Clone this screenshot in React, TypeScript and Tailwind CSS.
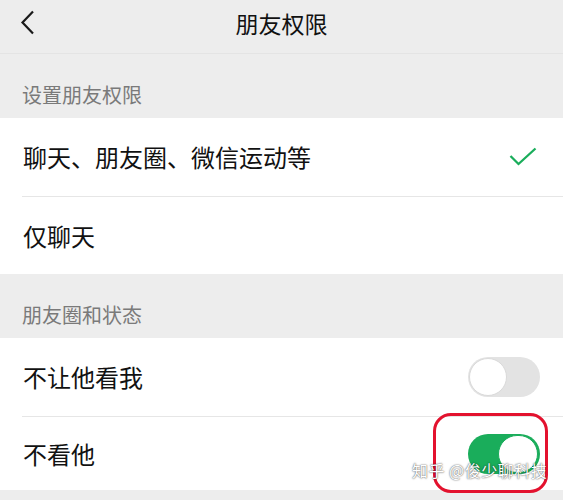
import React from "react";

const font = { fontFamily: '"Noto Sans CJK SC", "Noto Sans", sans-serif' };

function Toggle({ on }: { on: boolean }) {
  return on ? (
    <div className="w-[72px] h-[40px] rounded-full bg-[#1aad5b] flex items-center justify-end p-[2px]">
      <div className="w-[40px] h-[38px] rounded-full bg-white border border-[#1aad5b]" />
    </div>
  ) : (
    <div className="w-[72px] h-[40px] rounded-full bg-[#e3e3e3] flex items-center justify-start p-[1px]">
      <div className="w-[38px] h-[38px] rounded-full bg-white border border-[#dadada]" />
    </div>
  );
}

export default function App() {
  return (
    <div className="w-[563px] h-[500px] bg-[#ededed] overflow-hidden relative" style={font}>
      <div className="h-[54px] relative flex items-center justify-center border-b border-[#e4e4e4]">
        <svg className="absolute left-[19px] top-[10px]" width="17" height="25" viewBox="0 0 17 25">
          <path d="M14 1.5 L3.5 12.5 L14 23.5" fill="none" stroke="#1a1a1a" strokeWidth="2.2" />
        </svg>
        <span className="text-[23px] text-[#111] leading-none -mt-[6px]">朋友权限</span>
      </div>
      <div className="h-[64px] flex items-end pb-[8px] pl-[22px] text-[20px] text-[#7a7a7a]">设置朋友权限</div>
      <div className="bg-white">
        <div className="h-[78px] flex items-center justify-between pl-[23px] pr-[26px]">
          <span className="text-[24px] text-[#111]">聊天、朋友圈、微信运动等</span>
          <svg width="28" height="20" viewBox="0 0 28 20">
            <path d="M1.5 9 L9.5 17 L26.5 1.5" fill="none" stroke="#1aad5b" strokeWidth="2.3" />
          </svg>
        </div>
        <div className="ml-[22px] h-px bg-[#e6e6e6]" />
        <div className="h-[77px] flex items-center pl-[23px]">
          <span className="text-[24px] text-[#111]">仅聊天</span>
        </div>
      </div>
      <div className="h-[64px] flex items-end pb-[8px] pl-[22px] text-[20px] text-[#7a7a7a]">朋友圈和状态</div>
      <div className="bg-white">
        <div className="h-[78px] flex items-center justify-between pl-[23px] pr-[23px]">
          <span className="text-[24px] text-[#111]">不让他看我</span>
          <Toggle on={false} />
        </div>
        <div className="ml-[22px] h-px bg-[#e6e6e6]" />
        <div className="h-[73px] flex items-center justify-between pl-[23px] pr-[23px]">
          <span className="text-[24px] text-[#111]">不看他</span>
          <Toggle on={true} />
        </div>
      </div>
      <div className="absolute left-[433px] top-[413px] w-[115px] h-[80px] rounded-[18px] border-[3.5px] border-[#e3122e]" />
      <div
        className="absolute left-[412px] top-[462px] text-[16px] text-white tracking-[0.5px] leading-none"
        style={{ textShadow: "0 0 2px rgba(0,0,0,0.55), 0 0 1px rgba(0,0,0,0.5)" }}
      >
        知乎 @俊少聊科技
      </div>
    </div>
  );
}
